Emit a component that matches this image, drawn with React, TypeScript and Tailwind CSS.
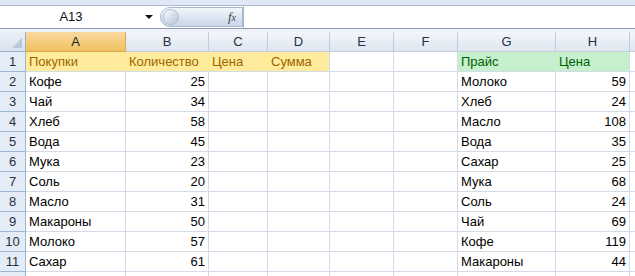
import { ReactNode } from "react";

const cols = ["A", "B", "C", "D", "E", "F", "G", "H"];

const rows: [string, string, string, string][] = [
  ["Покупки", "Количество", "Прайс", "Цена"],
  ["Кофе", "25", "Молоко", "59"],
  ["Чай", "34", "Хлеб", "24"],
  ["Хлеб", "58", "Масло", "108"],
  ["Вода", "45", "Вода", "35"],
  ["Мука", "23", "Сахар", "25"],
  ["Соль", "20", "Мука", "68"],
  ["Масло", "31", "Соль", "24"],
  ["Макароны", "50", "Чай", "69"],
  ["Молоко", "57", "Кофе", "119"],
  ["Сахар", "61", "Макароны", "44"],
  ["", "", "", ""],
];

const Cell = ({ children, className = "" }: { children?: ReactNode; className?: string }) => (
  <div className={`h-5 border-r border-b border-[#d4dbe7] px-[3px] leading-5 whitespace-nowrap overflow-hidden ${className}`}>
    {children}
  </div>
);

const App = () => {
  return (
    <div className="w-[635px] h-[276px] overflow-hidden bg-white text-[13px] text-black" style={{ fontFamily: '"Liberation Sans", Arial, sans-serif' }}>
      {/* ribbon edge */}
      <div className="h-[6px] bg-[#dfe8f4] border-b border-[#a9b8cc]" />

      {/* formula bar */}
      <div className="h-[22px] flex items-stretch bg-white">
        <div className="w-[160px] flex items-center relative">
          <span className="flex-1 text-center pr-[18px] text-[13px] text-[#111]">A13</span>
          <span className="absolute right-[7px] top-[9px] w-0 h-0 border-l-[4px] border-r-[4px] border-t-[4px] border-l-transparent border-r-transparent border-t-[#111]" />
        </div>
        <div className="w-[83px] my-[1px] rounded-l-full bg-gradient-to-b from-[#f4f7fb] via-[#dde6f2] to-[#c9d6e8] border border-[#a7b7cd] flex items-center justify-between pl-[2px] pr-[6px]">
          <span className="w-[16px] h-[16px] rounded-full bg-gradient-to-br from-[#fafcff] to-[#b6c3d4] border border-[#b4c0d0]" />
          <span className="italic text-[13px] text-[#444]" style={{ fontFamily: '"Liberation Serif", serif' }}>
            f<span className="text-[10px]">x</span>
          </span>
        </div>
        <div className="flex-1 border-l border-[#a7b7cd]" />
      </div>

      <div className="h-[1px] bg-[#8a9bb3]" />
      <div className="h-[3px] bg-[#eef2f8]" />

      {/* sheet */}
      <div className="grid grid-cols-[26px_100px_83px_59px_62px_64px_64px_98px_74px_1fr]">
        <div className="h-5 relative bg-gradient-to-b from-[#eaf0f8] to-[#d9e2ee] border-r border-b border-[#9eb0c8]">
          <span className="absolute right-[3px] bottom-[3px] w-0 h-0" style={{ borderRight: "10px solid #b9c7d9", borderTop: "10px solid transparent" }} />
        </div>
        {cols.map((c) => (
          <div
            key={c}
            className={`h-5 text-center leading-5 border-r border-b ${
              c === "A"
                ? "bg-gradient-to-b from-[#f9d99f] to-[#f1c15f] border-[#e2a64a] text-[#222]"
                : "bg-gradient-to-b from-[#f3f6fb] to-[#dfe6f0] border-[#c0cbdb] text-[#27303d]"
            }`}
          >
            {c}
          </div>
        ))}
        <div className="h-5 bg-gradient-to-b from-[#f3f6fb] to-[#dfe6f0] border-b border-[#c0cbdb]" />

        {rows.map((r, i) => {
          const head = i === 0;
          const last = i === rows.length - 1;
          return [
            <div key={`h${i}`} className="h-5 text-center leading-5 bg-[#e4ecf7] border-r border-b border-[#9eb6ce] text-[#27303d]">
              {last ? "" : i + 1}
            </div>,
            <Cell key={`a${i}`} className={head ? "bg-[#ffeb9c] text-[#9c6500] border-r-[#ffeb9c]" : ""}>{r[0]}</Cell>,
            <Cell key={`b${i}`} className={head ? "bg-[#ffeb9c] text-[#9c6500] border-r-[#ffeb9c]" : "text-right"}>{r[1]}</Cell>,
            <Cell key={`c${i}`} className={head ? "bg-[#ffeb9c] text-[#9c6500] border-r-[#ffeb9c]" : ""}>{head ? "Цена" : ""}</Cell>,
            <Cell key={`d${i}`} className={head ? "bg-[#ffeb9c] text-[#9c6500]" : ""}>{head ? "Сумма" : ""}</Cell>,
            <Cell key={`e${i}`} />,
            <Cell key={`f${i}`} />,
            <Cell key={`g${i}`} className={head ? "bg-[#c6efce] text-[#006100] border-r-[#c6efce]" : ""}>{r[2]}</Cell>,
            <Cell key={`hh${i}`} className={head ? "bg-[#c6efce] text-[#006100]" : "text-right"}>{r[3]}</Cell>,
            <div key={`x${i}`} className="h-5 border-b border-[#d4dbe7]" />,
          ];
        })}
      </div>
    </div>
  );
};

export default App;
